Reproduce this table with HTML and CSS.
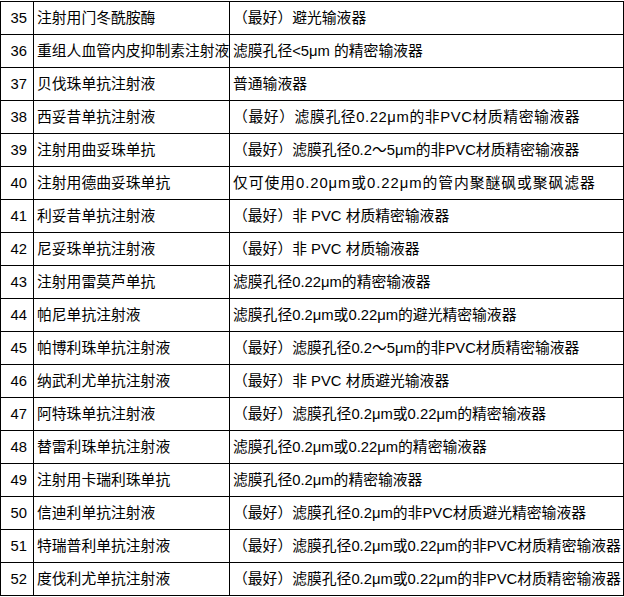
FILE: index.html
```html
<!DOCTYPE html>
<html lang="zh-CN">
<head>
<meta charset="utf-8">
<title>输液器</title>
<link rel="stylesheet" href="styles.css">
</head>
<body>
<div class="sheet">
  <div class="num">35</div><div class="cell">注射用门冬酰胺酶</div><div class="cell">（最好）避光输液器</div>
  <div class="num">36</div><div class="cell">重组人血管内皮抑制素注射液</div><div class="cell">滤膜孔径&lt;5μm 的精密输液器</div>
  <div class="num">37</div><div class="cell">贝伐珠单抗注射液</div><div class="cell">普通输液器</div>
  <div class="num">38</div><div class="cell">西妥昔单抗注射液</div><div class="cell spaced">（最好）滤膜孔径0.22μm的非PVC材质精密输液器</div>
  <div class="num">39</div><div class="cell">注射用曲妥珠单抗</div><div class="cell">（最好）滤膜孔径0.2～5μm的非PVC材质精密输液器</div>
  <div class="num">40</div><div class="cell">注射用德曲妥珠单抗</div><div class="cell spaced-more">仅可使用0.20μm或0.22μm的管内聚醚砜或聚砜滤器</div>
  <div class="num">41</div><div class="cell">利妥昔单抗注射液</div><div class="cell">（最好）非 PVC 材质精密输液器</div>
  <div class="num">42</div><div class="cell">尼妥珠单抗注射液</div><div class="cell">（最好）非 PVC 材质输液器</div>
  <div class="num">43</div><div class="cell">注射用雷莫芦单抗</div><div class="cell">滤膜孔径0.22μm的精密输液器</div>
  <div class="num">44</div><div class="cell">帕尼单抗注射液</div><div class="cell">滤膜孔径0.2μm或0.22μm的避光精密输液器</div>
  <div class="num">45</div><div class="cell">帕博利珠单抗注射液</div><div class="cell">（最好）滤膜孔径0.2～5μm的非PVC材质精密输液器</div>
  <div class="num">46</div><div class="cell">纳武利尤单抗注射液</div><div class="cell">（最好）非 PVC 材质避光输液器</div>
  <div class="num">47</div><div class="cell">阿特珠单抗注射液</div><div class="cell">（最好）滤膜孔径0.2μm或0.22μm的精密输液器</div>
  <div class="num">48</div><div class="cell">替雷利珠单抗注射液</div><div class="cell">滤膜孔径0.2μm或0.22μm的精密输液器</div>
  <div class="num">49</div><div class="cell">注射用卡瑞利珠单抗</div><div class="cell">滤膜孔径0.2μm的精密输液器</div>
  <div class="num">50</div><div class="cell">信迪利单抗注射液</div><div class="cell">（最好）滤膜孔径0.2μm的非PVC材质避光精密输液器</div>
  <div class="num">51</div><div class="cell">特瑞普利单抗注射液</div><div class="cell">（最好）滤膜孔径0.2μm或0.22μm的非PVC材质精密输液器</div>
  <div class="num">52</div><div class="cell">度伐利尤单抗注射液</div><div class="cell">（最好）滤膜孔径0.2μm或0.22μm的非PVC材质精密输液器</div>
</div>
</body>
</html>
```

FILE: styles.css
```css
html, body {
  margin: 0;
  padding: 0;
  background: #fff;
}
.sheet {
  margin-top: 1px;
  display: grid;
  grid-template-columns: 33px 196px 394px;
  grid-auto-rows: 33px;
  border-left: 1px solid #000;
  border-top: 1px solid #000;
  width: 623px;
  font-family: "Liberation Sans", "Noto Sans CJK SC", sans-serif;
  font-size: 14.8px;
  color: #000;
}
.num, .cell {
  box-sizing: border-box;
  border-right: 1px solid #000;
  border-bottom: 1px solid #000;
  display: flex;
  align-items: center;
  white-space: nowrap;
  overflow: hidden;
  line-height: 1;
}
.num {
  justify-content: flex-end;
  padding-right: 6px;
}
.cell {
  padding-left: 3px;
}
.spaced {
  letter-spacing: 0.6px;
}
.spaced-more {
  letter-spacing: 0.95px;
}
```
